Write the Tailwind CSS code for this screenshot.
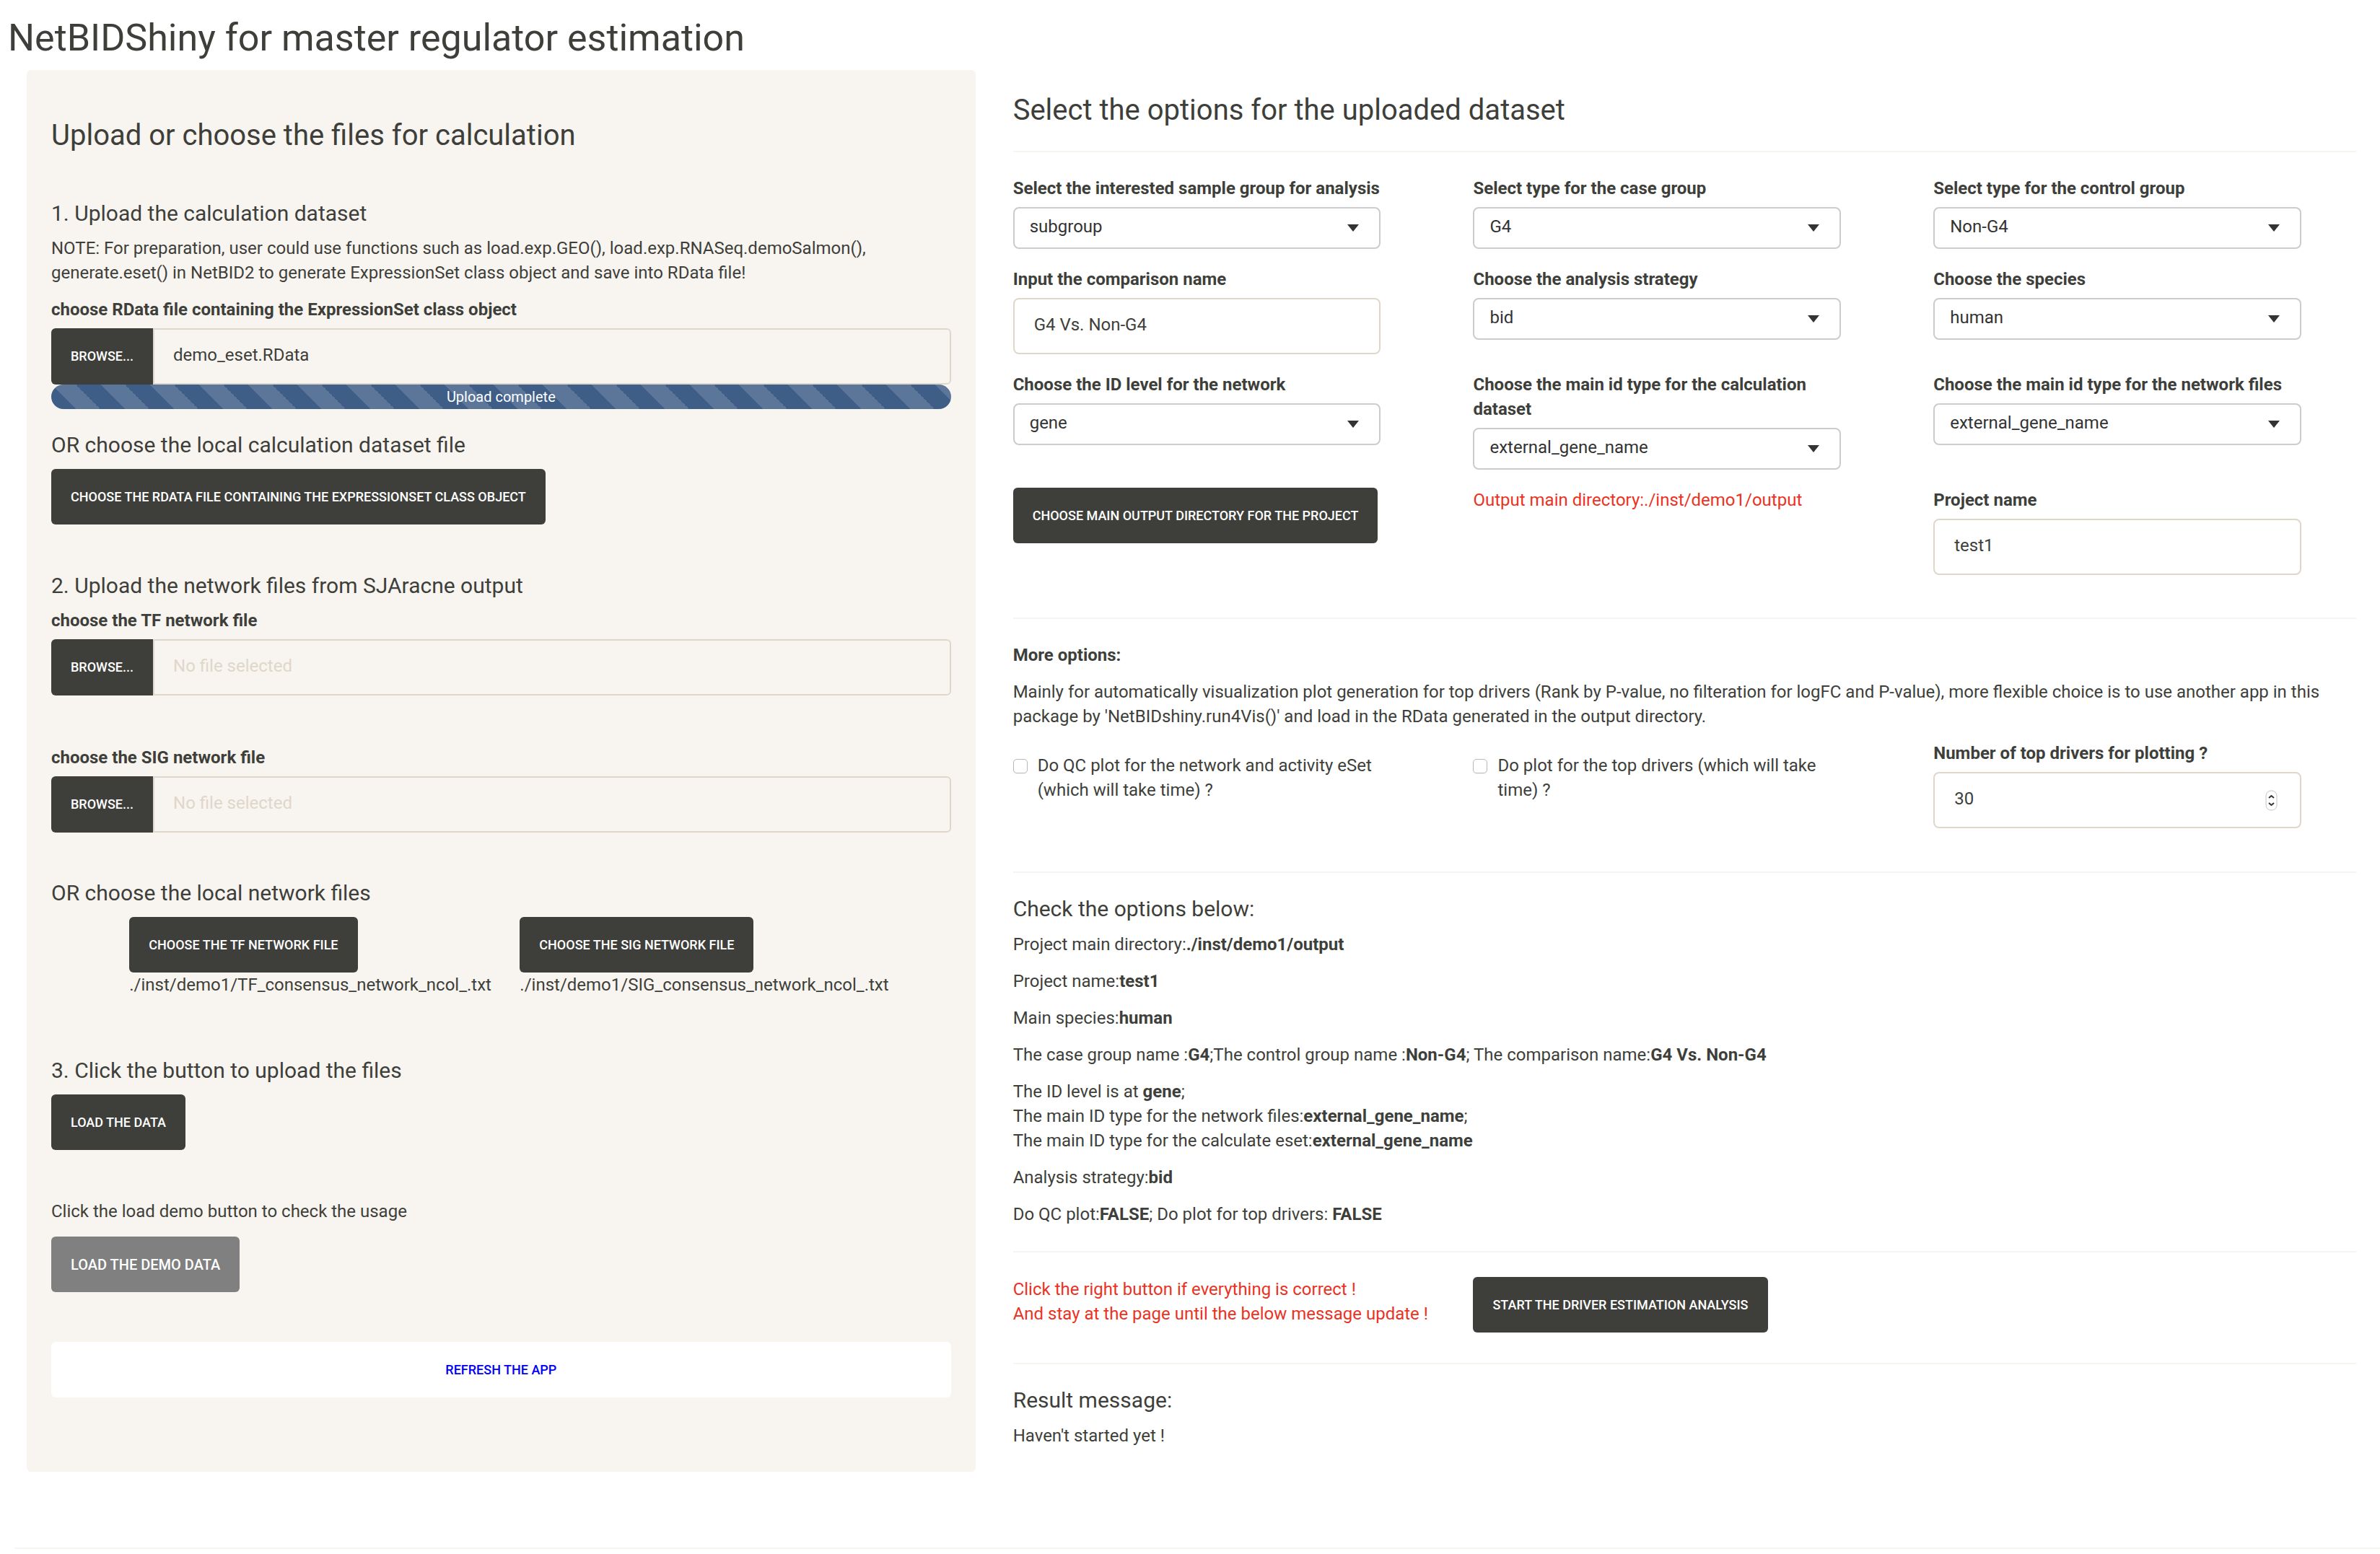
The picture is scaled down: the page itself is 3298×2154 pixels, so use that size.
<!DOCTYPE html>
<html lang="en">
<head>
<meta charset="utf-8">
<title>NetBIDShiny</title>
<script src="https://cdn.jsdelivr.net/npm/@tailwindcss/browser@4"></script>
</head>
<body class="bg-white font-['Roboto',sans-serif] text-[24px] leading-[34px] text-[#3e3f3a]">
<div class="px-[11px] pt-[25px]">
  <h1 class="text-[52px] leading-[56px]">NetBIDShiny for master regulator estimation</h1>

  <div class="mt-4 mr-[-4px] grid grid-cols-12">
    <!-- Upload panel -->
    <form class="col-span-5 mx-[26px] self-start rounded-[6px] bg-[#f8f5f0] px-[34px] pt-[69px] pb-[103px]">
      <h2 class="text-[40px] leading-[44px]">Upload or choose the files for calculation</h2>

      <h3 class="mt-[69px] text-[30px] leading-[34px]">1. Upload the calculation dataset</h3>
      <p class="mt-[14px]">NOTE: For preparation, user could use functions such as load.exp.GEO(), load.exp.RNASeq.demoSalmon(),<br>generate.eset() in NetBID2 to generate ExpressionSet class object and save into RData file!</p>
      <label for="eset" class="mt-[17px] mb-[9px] block font-bold">choose RData file containing the ExpressionSet class object</label>
      <div class="flex h-[78px]">
        <button type="button" class="rounded-l-[6px] bg-[#3e3f3a] px-[27px] text-[18px] font-medium text-white">BROWSE...</button>
        <input id="eset" type="text" readonly value="demo_eset.RData" class="min-w-0 flex-1 rounded-r-[6px] border-2 border-[#dfd7ca] bg-transparent px-[26px] pb-1">
      </div>
      <div role="progressbar" aria-valuenow="100" class="h-[34px] rounded-[17px] bg-[#3e5e87] bg-[linear-gradient(45deg,rgba(255,255,255,.15)_25%,transparent_25%,transparent_50%,rgba(255,255,255,.15)_50%,rgba(255,255,255,.15)_75%,transparent_75%,transparent)] bg-size-[68px_68px] text-center text-[20px] leading-[34px] text-white">Upload complete</div>

      <h3 class="mt-[33px] text-[30px] leading-[34px]">OR choose the local calculation dataset file</h3>
      <button type="button" class="mt-4 block h-[77px] rounded-[6px] bg-[#3e3f3a] px-[27px] text-[18px] font-medium text-white">CHOOSE THE RDATA FILE CONTAINING THE EXPRESSIONSET CLASS OBJECT</button>

      <h3 class="mt-[68px] text-[30px] leading-[34px]">2. Upload the network files from SJAracne output</h3>
      <label for="tf" class="mt-[14px] mb-[9px] block font-bold">choose the TF network file</label>
      <div class="flex h-[78px]">
        <button type="button" class="rounded-l-[6px] bg-[#3e3f3a] px-[27px] text-[18px] font-medium text-white">BROWSE...</button>
        <input id="tf" type="text" readonly placeholder="No file selected" class="min-w-0 flex-1 rounded-r-[6px] border-2 border-[#dfd7ca] bg-transparent px-[26px] pb-1 placeholder:text-[#dfd7ca]">
      </div>
      <label for="sig" class="mt-[69px] mb-[9px] block font-bold">choose the SIG network file</label>
      <div class="flex h-[78px]">
        <button type="button" class="rounded-l-[6px] bg-[#3e3f3a] px-[27px] text-[18px] font-medium text-white">BROWSE...</button>
        <input id="sig" type="text" readonly placeholder="No file selected" class="min-w-0 flex-1 rounded-r-[6px] border-2 border-[#dfd7ca] bg-transparent px-[26px] pb-1 placeholder:text-[#dfd7ca]">
      </div>

      <h3 class="mt-[67px] text-[30px] leading-[34px]">OR choose the local network files</h3>
      <div class="-mx-[26px] mt-4 grid grid-cols-12">
        <div class="col-span-5 col-start-2 pl-[26px]">
          <button type="button" class="block h-[77px] rounded-[6px] bg-[#3e3f3a] px-[27px] text-[18px] font-medium text-white">CHOOSE THE TF NETWORK FILE</button>
          <p class="whitespace-nowrap">./inst/demo1/TF_consensus_network_ncol_.txt</p>
        </div>
        <div class="col-span-5 pl-[26px]">
          <button type="button" class="block h-[77px] rounded-[6px] bg-[#3e3f3a] px-[27px] text-[18px] font-medium text-white">CHOOSE THE SIG NETWORK FILE</button>
          <p class="whitespace-nowrap">./inst/demo1/SIG_consensus_network_ncol_.txt</p>
        </div>
      </div>

      <h3 class="mt-[85px] text-[30px] leading-[34px]">3. Click the button to upload the files</h3>
      <button type="button" class="mt-4 block h-[77px] rounded-[6px] bg-[#3e3f3a] px-[27px] text-[18px] font-medium text-white">LOAD THE DATA</button>
      <p class="mt-[68px]">Click the load demo button to check the usage</p>
      <button type="button" class="mt-[18px] block h-[77px] rounded-[6px] bg-[#808080] px-[27px] text-[20px] font-medium text-white">LOAD THE DEMO DATA</button>
      <button type="button" class="mt-[69px] block h-[77px] w-full rounded-[6px] bg-white text-[18px] font-medium text-[#0000f5]">REFRESH THE APP</button>
    </form>

    <!-- Options -->
    <main class="col-span-7 mx-[26px] pt-[34px]">
      <h2 class="text-[40px] leading-[44px]">Select the options for the uploaded dataset</h2>
      <hr class="mt-[34px] border-t-2 border-[#f8f5f0]">

      <div class="-mr-[52px] mt-[33px] grid grid-cols-3">
        <div class="pr-32">
          <label for="group" class="mb-[9px] block font-bold">Select the interested sample group for analysis</label>
          <div class="relative">
            <select id="group" class="block h-[58px] w-full appearance-none rounded-[8px] border-2 border-[#ccc] bg-white px-[21px] pb-1 text-[#333]"><option>subgroup</option></select>
            <svg class="pointer-events-none absolute top-6 right-[30px] h-[10px] w-4 fill-[#333]" viewBox="0 0 16 10"><path d="M0 0h16L8 10z"/></svg>
          </div>
        </div>
        <div class="pr-32">
          <label for="case" class="mb-[9px] block font-bold">Select type for the case group</label>
          <div class="relative">
            <select id="case" class="block h-[58px] w-full appearance-none rounded-[8px] border-2 border-[#ccc] bg-white px-[21px] pb-1 text-[#333]"><option>G4</option></select>
            <svg class="pointer-events-none absolute top-6 right-[30px] h-[10px] w-4 fill-[#333]" viewBox="0 0 16 10"><path d="M0 0h16L8 10z"/></svg>
          </div>
        </div>
        <div class="pr-32">
          <label for="control" class="mb-[9px] block font-bold">Select type for the control group</label>
          <div class="relative">
            <select id="control" class="block h-[58px] w-full appearance-none rounded-[8px] border-2 border-[#ccc] bg-white px-[21px] pb-1 text-[#333]"><option>Non-G4</option></select>
            <svg class="pointer-events-none absolute top-6 right-[30px] h-[10px] w-4 fill-[#333]" viewBox="0 0 16 10"><path d="M0 0h16L8 10z"/></svg>
          </div>
        </div>
      </div>

      <div class="-mr-[52px] mt-[25px] grid grid-cols-3">
        <div class="pr-32">
          <label for="comparison" class="mb-[9px] block font-bold">Input the comparison name</label>
          <input id="comparison" type="text" value="G4 Vs. Non-G4" class="block h-[78px] w-full rounded-[8px] border-2 border-[#dfd7ca] bg-white px-[27px] pb-1">
        </div>
        <div class="pr-32">
          <label for="strategy" class="mb-[9px] block font-bold">Choose the analysis strategy</label>
          <div class="relative">
            <select id="strategy" class="block h-[58px] w-full appearance-none rounded-[8px] border-2 border-[#ccc] bg-white px-[21px] pb-1 text-[#333]"><option>bid</option></select>
            <svg class="pointer-events-none absolute top-6 right-[30px] h-[10px] w-4 fill-[#333]" viewBox="0 0 16 10"><path d="M0 0h16L8 10z"/></svg>
          </div>
        </div>
        <div class="pr-32">
          <label for="species" class="mb-[9px] block font-bold">Choose the species</label>
          <div class="relative">
            <select id="species" class="block h-[58px] w-full appearance-none rounded-[8px] border-2 border-[#ccc] bg-white px-[21px] pb-1 text-[#333]"><option>human</option></select>
            <svg class="pointer-events-none absolute top-6 right-[30px] h-[10px] w-4 fill-[#333]" viewBox="0 0 16 10"><path d="M0 0h16L8 10z"/></svg>
          </div>
        </div>
      </div>

      <div class="-mr-[52px] mt-[25px] grid grid-cols-3">
        <div class="pr-32">
          <label for="level" class="mb-[9px] block font-bold">Choose the ID level for the network</label>
          <div class="relative">
            <select id="level" class="block h-[58px] w-full appearance-none rounded-[8px] border-2 border-[#ccc] bg-white px-[21px] pb-1 text-[#333]"><option>gene</option></select>
            <svg class="pointer-events-none absolute top-6 right-[30px] h-[10px] w-4 fill-[#333]" viewBox="0 0 16 10"><path d="M0 0h16L8 10z"/></svg>
          </div>
        </div>
        <div class="pr-32">
          <label for="calcid" class="mb-[9px] block font-bold">Choose the main id type for the calculation dataset</label>
          <div class="relative">
            <select id="calcid" class="block h-[58px] w-full appearance-none rounded-[8px] border-2 border-[#ccc] bg-white px-[21px] pb-1 text-[#333]"><option>external_gene_name</option></select>
            <svg class="pointer-events-none absolute top-6 right-[30px] h-[10px] w-4 fill-[#333]" viewBox="0 0 16 10"><path d="M0 0h16L8 10z"/></svg>
          </div>
        </div>
        <div class="pr-32">
          <label for="netid" class="mb-[9px] block font-bold">Choose the main id type for the network files</label>
          <div class="relative">
            <select id="netid" class="block h-[58px] w-full appearance-none rounded-[8px] border-2 border-[#ccc] bg-white px-[21px] pb-1 text-[#333]"><option>external_gene_name</option></select>
            <svg class="pointer-events-none absolute top-6 right-[30px] h-[10px] w-4 fill-[#333]" viewBox="0 0 16 10"><path d="M0 0h16L8 10z"/></svg>
          </div>
        </div>
      </div>

      <div class="-mr-[52px] mt-[25px] grid grid-cols-3">
        <div>
          <button type="button" class="block h-[77px] rounded-[6px] bg-[#3e3f3a] px-[27px] text-[18px] font-medium text-white">CHOOSE MAIN OUTPUT DIRECTORY FOR THE PROJECT</button>
        </div>
        <p class="text-[#eb3223]">Output main directory:./inst/demo1/output</p>
        <div class="pr-32">
          <label for="project" class="mb-[9px] block font-bold">Project name</label>
          <input id="project" type="text" value="test1" class="block h-[78px] w-full rounded-[8px] border-2 border-[#dfd7ca] bg-white px-[27px] pb-1">
        </div>
      </div>

      <hr class="mt-[59px] border-t-2 border-[#f8f5f0]">
      <p class="mt-[33px] font-bold">More options:</p>
      <p class="mt-[17px]">Mainly for automatically visualization plot generation for top drivers (Rank by P-value, no filteration for logFC and P-value), more flexible choice is to use another app in this package by 'NetBIDshiny.run4Vis()' and load in the RData generated in the output directory.</p>

      <div class="-mr-[52px] mt-[17px] grid grid-cols-3">
        <label class="mt-[17px] flex items-start gap-[14px] pr-32">
          <input type="checkbox" class="mt-2 h-5 w-5 shrink-0 appearance-none rounded-[5px] border border-[#b8b8b8] bg-white shadow-xs">
          <span>Do QC plot for the network and activity eSet (which will take time) ?</span>
        </label>
        <label class="mt-[17px] flex items-start gap-[14px] pr-32">
          <input type="checkbox" class="mt-2 h-5 w-5 shrink-0 appearance-none rounded-[5px] border border-[#b8b8b8] bg-white shadow-xs">
          <span>Do plot for the top drivers (which will take time) ?</span>
        </label>
        <div class="pr-32">
          <label for="top" class="mb-[9px] block font-bold">Number of top drivers for plotting ?</label>
          <div class="relative">
            <input id="top" type="number" value="30" class="block h-[78px] w-full rounded-[8px] border-2 border-[#dfd7ca] bg-white px-[27px] pb-1 [appearance:textfield]">
            <svg class="pointer-events-none absolute top-[25px] right-[33px] h-[30px] w-[17px]" viewBox="0 0 17 30" fill="none"><rect x="1" y="1" width="15" height="27" rx="7" fill="#fff" stroke="#c4c4c4"/><path d="M5 11l3.500-3 3.500 3M5 18l3.500 3 3.500-3" stroke="#333" stroke-width="2"/></svg>
          </div>
        </div>
      </div>

      <hr class="mt-[60px] border-t-2 border-[#f8f5f0]">
      <h3 class="mt-[33px] text-[30px] leading-[34px]">Check the options below:</h3>
      <div class="mt-[15px] space-y-[17px]">
        <p>Project main directory:<b>./inst/demo1/output</b></p>
        <p>Project name:<b>test1</b></p>
        <p>Main species:<b>human</b></p>
        <p>The case group name :<b>G4</b>;The control group name :<b>Non-G4</b>; The comparison name:<b>G4 Vs. Non-G4</b></p>
        <p>The ID level is at <b>gene</b>;<br>The main ID type for the network files:<b>external_gene_name</b>;<br>The main ID type for the calculate eset:<b>external_gene_name</b></p>
        <p>Analysis strategy:<b>bid</b></p>
        <p>Do QC plot:<b>FALSE</b>; Do plot for top drivers: <b>FALSE</b></p>
      </div>

      <hr class="mt-[34px] border-t-2 border-[#f8f5f0]">
      <div class="-mr-[52px] mt-[34px] grid grid-cols-3">
        <p class="text-[#eb3223]">Click the right button if everything is correct !<br>And stay at the page until the below message update !</p>
        <div>
          <button type="button" class="block h-[77px] rounded-[6px] bg-[#3e3f3a] px-[27px] text-[18px] font-medium text-white">START THE DRIVER ESTIMATION ANALYSIS</button>
        </div>
      </div>
      <hr class="mt-[42px] border-t-2 border-[#f8f5f0]">
      <h3 class="mt-[33px] text-[30px] leading-[34px]">Result message:</h3>
      <p class="mt-[15px]">Haven't started yet !</p>
    </main>
  </div>
  <hr class="mt-[105px] -mr-[11px] ml-[9px] border-t-2 border-[#f8f5f0]">
</div>
</body>
</html>
